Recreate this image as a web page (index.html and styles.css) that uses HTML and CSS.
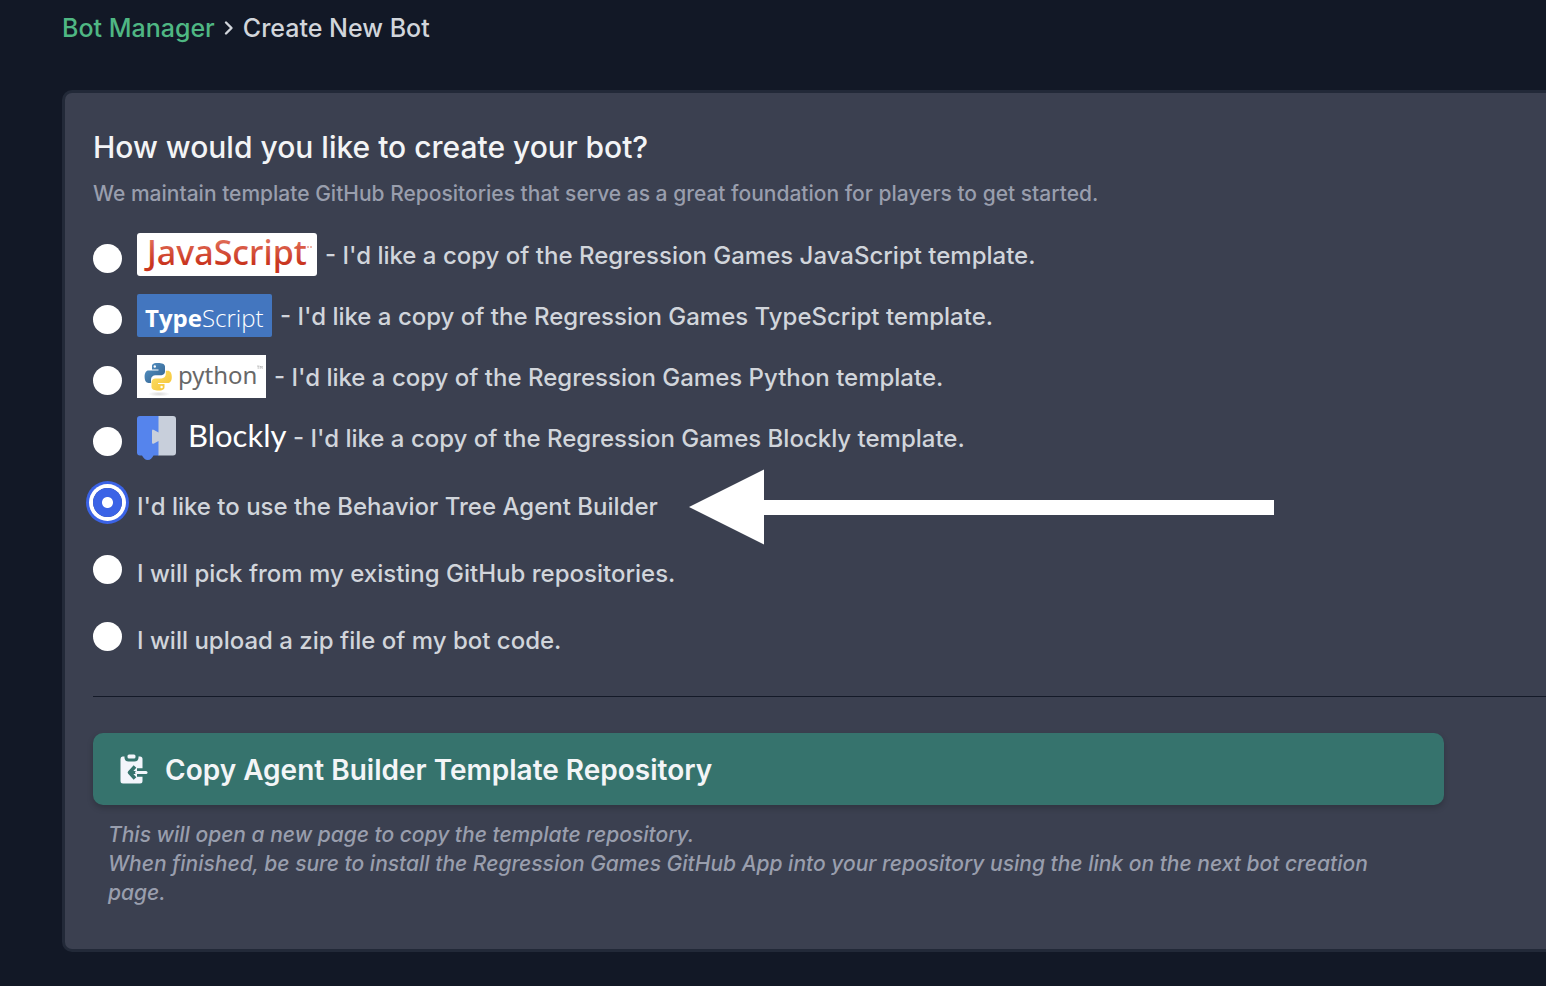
FILE: index.html
```html
<!DOCTYPE html>
<html lang="en">
<head>
<meta charset="utf-8">
<meta name="viewport" content="width=device-width, initial-scale=1">
<title>Create New Bot</title>
<link rel="stylesheet" href="styles.css">
</head>
<body>
<nav class="breadcrumb" aria-label="Breadcrumb">
  <a href="#">Bot Manager</a>
  <svg class="chevron" width="10" height="16" viewBox="0 0 10 16" aria-hidden="true"><path d="M2 2.500L7.500 8L2 13.500" fill="none" stroke="currentColor" stroke-width="2.400" stroke-linecap="round" stroke-linejoin="round"/></svg>
  <span>Create New Bot</span>
</nav>
<main class="card">
  <h1 class="title">How would you like to create your bot?</h1>
  <p class="subtitle">We maintain template GitHub Repositories that serve as a great foundation for players to get started.</p>
  <form>
    <div class="options">
      <div class="option">
        <input class="radio" type="radio" name="source" id="js">
        <label for="js">
          <svg class="logo" width="180" height="43" viewBox="0 0 180 43" aria-hidden="true">
            <defs><linearGradient id="red" x1="0" y1="0" x2="0" y2="1"><stop offset="0.200" stop-color="#e2705b"/><stop offset="0.750" stop-color="#c9351f"/></linearGradient></defs>
            <rect width="180" height="43" rx="3" fill="#fff"/>
            <text class="logo-js" x="10" y="32" fill="url(#red)">JavaScript</text>
            <path d="M170 14h2M173 14h2" stroke="#e2705b"/>
          </svg>
          <span class="text">- I'd like a copy of the Regression Games JavaScript template.</span>
        </label>
      </div>
      <div class="option">
        <input class="radio" type="radio" name="source" id="ts">
        <label for="ts">
          <svg class="logo" width="135" height="43" viewBox="0 0 135 43" aria-hidden="true">
            <rect width="135" height="43" rx="2" fill="#4376bf"/>
            <text class="logo-ts" x="8" y="33" fill="#fff"><tspan class="bold">Type</tspan><tspan class="light">Script</tspan></text>
          </svg>
          <span class="text">- I'd like a copy of the Regression Games TypeScript template.</span>
        </label>
      </div>
      <div class="option">
        <input class="radio" type="radio" name="source" id="py">
        <label for="py">
          <svg class="logo" width="129" height="43" viewBox="0 0 129 43" aria-hidden="true">
            <defs>
              <linearGradient id="blue" x1="0" y1="0" x2="1" y2="1"><stop stop-color="#5695c8"/><stop offset="1" stop-color="#315f8b"/></linearGradient>
              <linearGradient id="gold" x1="0" y1="0" x2="1" y2="1"><stop stop-color="#fce16b"/><stop offset="1" stop-color="#f5c232"/></linearGradient>
              <radialGradient id="shade"><stop stop-color="#d8d8d8"/><stop offset="1" stop-color="#fff"/></radialGradient>
            </defs>
            <rect width="129" height="43" fill="#fff"/>
            <ellipse cx="22" cy="39" rx="11" ry="2.500" fill="url(#shade)"/>
            <path fill="url(#blue)" d="M20.800 8C15 8 15 10 15 11.500V14.500h6.500v1H11.500C9 15.500 7.600 18 7.600 21.800s1.400 6.200 3.900 6.200H14v-3.500c0-2.500 2-4.300 4.500-4.300h6c2 0 3.500-1.600 3.500-3.600V11.500C28 9 25 8 20.800 8z"/>
            <circle cx="17.800" cy="11.500" r="1.200" fill="#fff"/>
            <path fill="url(#gold)" d="M21.500 35.500c5.600 0 6-1.900 6-3.500v-3H21v-1h9.600c2.500 0 4.200-2 4.200-6.100 0-4-1.600-6.200-4-6.200h-2V19c0 2.600-2 4.400-4.400 4.400h-6c-2 0-3.900 1.600-3.900 3.600v5c0 2.500 3 3.500 7 3.500z"/>
            <circle cx="24.600" cy="32" r="1.200" fill="#fff"/>
            <text class="logo-py" x="41" y="29" fill="#686868">python</text>
            <path d="M120 11h2.500M121.200 11v3M123.200 14v-3l1 1.500l1-1.500v3" fill="none" stroke="#999" stroke-width="0.500"/>
          </svg>
          <span class="text">- I'd like a copy of the Regression Games Python template.</span>
        </label>
      </div>
      <div class="option">
        <input class="radio" type="radio" name="source" id="bl">
        <label for="bl">
          <svg class="logo" width="148" height="44" viewBox="0 0 148 44" aria-hidden="true">
            <path fill="#5584ed" d="M3 0H22V39.500H16.500C15 42 13.500 44 10.800 44S6.500 42 5 39.500H3Q0 39.500 0 36.500V3Q0 0 3 0z"/>
            <path fill="#c8cfdb" d="M21.500 0H36Q39 0 39 3V36.500Q39 39.500 36 39.500H21.500V25L17 27.500Q15 28.500 15 26.500V15Q15 12.500 17 14L21.500 16.500z"/>
            <text class="logo-bl" x="51" y="31" fill="#fff">Blockly</text>
          </svg>
          <span class="text">- I'd like a copy of the Regression Games Blockly template.</span>
        </label>
      </div>
      <div class="option plain">
        <input class="radio" type="radio" name="source" id="bt" checked>
        <label for="bt">I'd like to use the Behavior Tree Agent Builder</label>
        <svg class="pointer" width="586" height="76" viewBox="0 0 586 76" aria-hidden="true"><path fill="#fff" d="M0 38L75 0.500V31H585V46H75V75.500z"/></svg>
      </div>
      <div class="option plain">
        <input class="radio" type="radio" name="source" id="gh">
        <label for="gh">I will pick from my existing GitHub repositories.</label>
      </div>
      <div class="option plain">
        <input class="radio" type="radio" name="source" id="zip">
        <label for="zip">I will upload a zip file of my bot code.</label>
      </div>
    </div>
    <hr class="divider">
    <div class="actions">
      <button class="submit" type="button">
        <svg width="28" height="30" viewBox="0 0 28 30" aria-hidden="true">
          <rect x="7.500" y="0.500" width="8" height="4" rx="1.500" fill="#f3f5fb"/>
          <path fill="#f3f5fb" d="M2.500 2.500H4.500V4Q5 7.500 8.500 7.500H14.500Q18 7.500 18.500 4V2.500H20Q22.500 2.500 22.500 5V27Q22.500 29.500 20 29.500H3Q0.500 29.500 0.500 27V5Q0.500 2.500 2.500 2.500z"/>
          <path d="M15 12.500L9.500 18.500L15 24.500" fill="none" stroke="#36736d" stroke-width="3.600" stroke-linejoin="round"/>
          <path d="M9.500 18.500H17M17 15.700H23M17 21.300H23" stroke="#36736d" stroke-width="3"/>
          <path d="M16.500 18.500H26" stroke="#f3f5fb" stroke-width="3" stroke-linecap="round"/>
        </svg>
        <span class="text">Copy Agent Builder Template Repository</span>
      </button>
      <p class="hint">This will open a new page to copy the template repository.<br>When finished, be sure to install the Regression Games GitHub App into your repository using the link on the next bot creation page.</p>
    </div>
  </form>
</main>
</body>
</html>
```
FILE: styles.css
```css
* {
  box-sizing: border-box;
}

body {
  margin: 0;
  padding: 10px 0 34px 62px;
  background: #121826;
  color: #d1d5db;
  font-family: Inter, "Liberation Sans", sans-serif;
  font-size: 24px;
  font-weight: 500;
}

.breadcrumb {
  display: flex;
  align-items: center;
  gap: 9px;
  height: 36px;
  font-size: 25px;
}

.breadcrumb a {
  color: #4fb783;
  text-decoration: none;
}

.card {
  margin-top: 44px;
  padding: 32px 0 42px 28px;
  background: #3b4050;
  border: 3px solid #222938;
  border-right: 0;
  border-radius: 10px 0 0 10px;
}

.title {
  margin: 0;
  color: #f3f4f6;
  font-size: 30px;
  font-weight: 500;
  line-height: 44px;
}

.subtitle {
  margin: 9px 0 23px;
  color: #999ead;
  font-size: 21px;
  line-height: 32px;
}

.options {
  display: flex;
  flex-direction: column;
  gap: 18px;
}

.option {
  position: relative;
  display: flex;
  align-items: flex-start;
  gap: 15px;
  height: 43px;
}

.option label {
  display: flex;
  align-items: center;
  gap: 8px;
  height: 43px;
}

.option.plain {
  height: 49px;
  padding-top: 8px;
}

.text {
  padding-top: 2px;
}

.logo {
  flex: none;
  overflow: visible;
}

.radio {
  appearance: none;
  flex: none;
  width: 29px;
  height: 29px;
  margin: 11px 0 0;
  background: #fff;
  border-radius: 50%;
}

.plain .radio {
  margin-top: 3px;
}

.radio:checked {
  background: radial-gradient(circle, #fff 5px, #3b63e6 6px);
  box-shadow: 0 0 0 4px #fff, 0 0 0 7px #3b63e6;
}

.pointer {
  position: absolute;
  top: -8px;
  left: 596px;
}

.logo-js {
  font-family: "Noto Sans", sans-serif;
  font-size: 34px;
}

.logo-ts {
  font-family: "Open Sans", sans-serif;
  font-size: 24px;
}

.bold {
  font-weight: 700;
}

.light {
  font-weight: 300;
}

.logo-py {
  font-family: "Noto Sans", sans-serif;
  font-size: 24px;
  font-weight: 400;
}

.logo-bl {
  font-family: Lato, sans-serif;
  font-size: 31px;
  font-weight: 400;
}

.divider {
  height: 1px;
  margin: 36px 0;
  background: #141a28;
  border: 0;
}

.actions {
  margin-right: 102px;
}

.submit {
  display: flex;
  align-items: center;
  gap: 17px;
  width: 100%;
  height: 72px;
  padding: 0 27px;
  background: #36736d;
  color: #f3f5f7;
  border: 0;
  border-radius: 10px;
  box-shadow: 0 3px 6px rgba(0, 0, 0, 0.2);
  font-family: inherit;
  font-size: 28px;
  font-weight: 600;
}

.hint {
  margin: 15px 32px 0 15px;
  color: #999ead;
  font-size: 21px;
  font-style: italic;
  line-height: 29px;
}
```
